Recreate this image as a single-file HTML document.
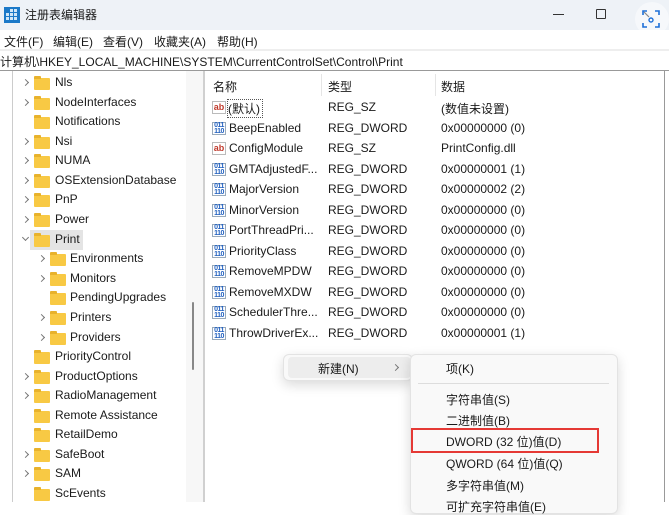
<!DOCTYPE html>
<html><head><meta charset="utf-8"><style>
*{margin:0;padding:0;box-sizing:border-box}
body{width:669px;height:502px;overflow:hidden;background:#fff;font-family:"Liberation Sans","Noto Sans CJK SC",sans-serif;font-size:12px;color:#1a1a1a;position:relative}
.a{position:absolute;white-space:nowrap}
.title{left:0;top:0;width:669px;height:30px;background:#eef2f7}
.fold{position:absolute;width:16px;height:12px;background:#f8c944;border-radius:1px}
.fold:before{content:"";position:absolute;left:0;top:-2px;width:7px;height:3px;background:#e8b22c;border-radius:1px 1px 0 0}
.arr{position:absolute;width:5px;height:5px;border-right:1.2px solid #777;border-bottom:1.2px solid #777;transform:rotate(-45deg)}
.dn{transform:rotate(45deg)}
.t{position:absolute;font-size:12px;white-space:nowrap}
.ic{position:absolute;width:14px;height:13px;font-size:9px;font-weight:bold;line-height:11px;text-align:center}
.ab{color:#c0392b;background:#fff;border:1px solid #bbb}
.bn{color:#1f5fbf;border:1px solid #9ab;font-size:7px;line-height:6px;letter-spacing:-.5px}
.menu{background:#f9f9f9;border:1px solid #e3e3e3;border-radius:6px;box-shadow:0 4px 12px rgba(0,0,0,.15)}
</style></head><body>
<div class="a title"></div>
<svg class="a" style="left:4px;top:7px" width="16" height="16"><rect x="0" y="0" width="16" height="16" fill="#1b79c8"/><g fill="#cfe6f7"><rect x="2" y="6" width="3" height="3"/><rect x="6" y="6" width="3" height="3"/><rect x="10" y="6" width="3" height="3"/><rect x="2" y="10" width="3" height="3"/><rect x="6" y="10" width="3" height="3"/><rect x="10" y="10" width="3" height="3"/><rect x="6" y="2" width="3" height="3"/><rect x="10" y="2" width="3" height="3"/></g></svg>
<div class="a" style="left:25px;top:6px;font-size:12px">注册表编辑器</div>
<div class="a" style="left:553px;top:14px;width:11px;height:1px;background:#333"></div>
<div class="a" style="left:596px;top:9px;width:10px;height:10px;border:1px solid #333;border-radius:1px"></div>
<div class="a" style="left:635px;top:2px;width:34px;height:34px;border-radius:50%;background:#f6f8fb"></div>
<svg class="a" style="left:641px;top:9px" width="20" height="20"><path d="M2 6V2h4M14 2h4v4M18 14v4h-4M6 18H2v-4" stroke="#1d6fd8" stroke-width="1.6" fill="none"/><circle cx="10" cy="11" r="2" stroke="#1d6fd8" stroke-width="1.4" fill="none"/><path d="M3 3l5 5" stroke="#888" stroke-width="1.2"/></svg>
<div class="a" style="left:0;top:30px;width:669px;height:20px;background:#fff"></div>
<div class="a" style="left:4px;top:33px">文件(F)</div>
<div class="a" style="left:53px;top:33px">编辑(E)</div>
<div class="a" style="left:103px;top:33px">查看(V)</div>
<div class="a" style="left:154px;top:33px">收藏夹(A)</div>
<div class="a" style="left:217px;top:33px">帮助(H)</div>
<div class="a" style="left:0;top:49px;width:669px;height:2px;background:#eee"></div>
<div class="a" style="left:0;top:53px">计算机\HKEY_LOCAL_MACHINE\SYSTEM\CurrentControlSet\Control\Print</div>
<div class="a" style="left:0;top:70px;width:669px;height:1px;background:#999"></div>
<div class="a" style="left:12px;top:71px;width:1px;height:431px;background:#ccc"></div>
<div class="a" style="left:186px;top:71px;width:17px;height:431px;background:#f7f7f7"></div>
<div class="a" style="left:192px;top:302px;width:2px;height:68px;background:#888;border-radius:1px"></div>
<div class="a" style="left:203px;top:71px;width:2px;height:431px;background:#d0d0d0"></div>
<div class="a" style="left:664px;top:71px;width:1px;height:431px;background:#999"></div>
<div class="a" style="left:30px;top:230px;width:53px;height:20px;background:#e4e4e4"></div>
<!-- tree -->
<div class="arr" style="left:23px;top:80px"></div><div class="fold" style="left:34px;top:78px"></div><div class="t" style="left:55px;top:75px">Nls</div>
<div class="arr" style="left:23px;top:100px"></div><div class="fold" style="left:34px;top:98px"></div><div class="t" style="left:55px;top:95px">NodeInterfaces</div>
<div class="fold" style="left:34px;top:117px"></div><div class="t" style="left:55px;top:114px">Notifications</div>
<div class="arr" style="left:23px;top:139px"></div><div class="fold" style="left:34px;top:137px"></div><div class="t" style="left:55px;top:134px">Nsi</div>
<div class="arr" style="left:23px;top:158px"></div><div class="fold" style="left:34px;top:156px"></div><div class="t" style="left:55px;top:153px">NUMA</div>
<div class="arr" style="left:23px;top:178px"></div><div class="fold" style="left:34px;top:176px"></div><div class="t" style="left:55px;top:173px">OSExtensionDatabase</div>
<div class="arr" style="left:23px;top:197px"></div><div class="fold" style="left:34px;top:195px"></div><div class="t" style="left:55px;top:192px">PnP</div>
<div class="arr" style="left:23px;top:217px"></div><div class="fold" style="left:34px;top:215px"></div><div class="t" style="left:55px;top:212px">Power</div>
<div class="arr dn" style="left:23px;top:235px"></div><div class="fold" style="left:34px;top:235px"></div><div class="t" style="left:55px;top:232px">Print</div>
<div class="arr" style="left:39px;top:256px"></div><div class="fold" style="left:50px;top:254px"></div><div class="t" style="left:70px;top:251px">Environments</div>
<div class="arr" style="left:39px;top:276px"></div><div class="fold" style="left:50px;top:274px"></div><div class="t" style="left:70px;top:271px">Monitors</div>
<div class="fold" style="left:50px;top:293px"></div><div class="t" style="left:70px;top:290px">PendingUpgrades</div>
<div class="arr" style="left:39px;top:315px"></div><div class="fold" style="left:50px;top:313px"></div><div class="t" style="left:70px;top:310px">Printers</div>
<div class="arr" style="left:39px;top:335px"></div><div class="fold" style="left:50px;top:333px"></div><div class="t" style="left:70px;top:330px">Providers</div>
<div class="fold" style="left:34px;top:352px"></div><div class="t" style="left:55px;top:349px">PriorityControl</div>
<div class="arr" style="left:23px;top:374px"></div><div class="fold" style="left:34px;top:372px"></div><div class="t" style="left:55px;top:369px">ProductOptions</div>
<div class="arr" style="left:23px;top:393px"></div><div class="fold" style="left:34px;top:391px"></div><div class="t" style="left:55px;top:388px">RadioManagement</div>
<div class="fold" style="left:34px;top:411px"></div><div class="t" style="left:55px;top:408px">Remote Assistance</div>
<div class="fold" style="left:34px;top:430px"></div><div class="t" style="left:55px;top:427px">RetailDemo</div>
<div class="arr" style="left:23px;top:452px"></div><div class="fold" style="left:34px;top:450px"></div><div class="t" style="left:55px;top:447px">SafeBoot</div>
<div class="arr" style="left:23px;top:471px"></div><div class="fold" style="left:34px;top:469px"></div><div class="t" style="left:55px;top:466px">SAM</div>
<div class="fold" style="left:34px;top:489px"></div><div class="t" style="left:55px;top:486px">ScEvents</div>
<!-- list header -->
<div class="t" style="left:213px;top:78px">名称</div>
<div class="a" style="left:321px;top:74px;width:1px;height:22px;background:#e5e5e5"></div>
<div class="t" style="left:328px;top:78px">类型</div>
<div class="a" style="left:435px;top:74px;width:1px;height:22px;background:#e5e5e5"></div>
<div class="t" style="left:441px;top:78px">数据</div>
<div class="ic ab" style="left:212px;top:101px">ab</div><div class="t" style="left:227px;top:99px;border:1px dotted #555;padding:0 2px 0 0">(默认)</div><div class="t" style="left:328px;top:100px">REG_SZ</div><div class="t" style="left:441px;top:100px">(数值未设置)</div>
<div class="ic bn" style="left:212px;top:122px">011<br>110</div><div class="t" style="left:229px;top:121px">BeepEnabled</div><div class="t" style="left:328px;top:121px">REG_DWORD</div><div class="t" style="left:441px;top:121px">0x00000000 (0)</div>
<div class="ic ab" style="left:212px;top:142px">ab</div><div class="t" style="left:229px;top:141px">ConfigModule</div><div class="t" style="left:328px;top:141px">REG_SZ</div><div class="t" style="left:441px;top:141px">PrintConfig.dll</div>
<div class="ic bn" style="left:212px;top:163px">011<br>110</div><div class="t" style="left:229px;top:162px">GMTAdjustedF...</div><div class="t" style="left:328px;top:162px">REG_DWORD</div><div class="t" style="left:441px;top:162px">0x00000001 (1)</div>
<div class="ic bn" style="left:212px;top:183px">011<br>110</div><div class="t" style="left:229px;top:182px">MajorVersion</div><div class="t" style="left:328px;top:182px">REG_DWORD</div><div class="t" style="left:441px;top:182px">0x00000002 (2)</div>
<div class="ic bn" style="left:212px;top:204px">011<br>110</div><div class="t" style="left:229px;top:203px">MinorVersion</div><div class="t" style="left:328px;top:203px">REG_DWORD</div><div class="t" style="left:441px;top:203px">0x00000000 (0)</div>
<div class="ic bn" style="left:212px;top:224px">011<br>110</div><div class="t" style="left:229px;top:223px">PortThreadPri...</div><div class="t" style="left:328px;top:223px">REG_DWORD</div><div class="t" style="left:441px;top:223px">0x00000000 (0)</div>
<div class="ic bn" style="left:212px;top:245px">011<br>110</div><div class="t" style="left:229px;top:244px">PriorityClass</div><div class="t" style="left:328px;top:244px">REG_DWORD</div><div class="t" style="left:441px;top:244px">0x00000000 (0)</div>
<div class="ic bn" style="left:212px;top:265px">011<br>110</div><div class="t" style="left:229px;top:264px">RemoveMPDW</div><div class="t" style="left:328px;top:264px">REG_DWORD</div><div class="t" style="left:441px;top:264px">0x00000000 (0)</div>
<div class="ic bn" style="left:212px;top:286px">011<br>110</div><div class="t" style="left:229px;top:285px">RemoveMXDW</div><div class="t" style="left:328px;top:285px">REG_DWORD</div><div class="t" style="left:441px;top:285px">0x00000000 (0)</div>
<div class="ic bn" style="left:212px;top:306px">011<br>110</div><div class="t" style="left:229px;top:305px">SchedulerThre...</div><div class="t" style="left:328px;top:305px">REG_DWORD</div><div class="t" style="left:441px;top:305px">0x00000000 (0)</div>
<div class="ic bn" style="left:212px;top:327px">011<br>110</div><div class="t" style="left:229px;top:326px">ThrowDriverEx...</div><div class="t" style="left:328px;top:326px">REG_DWORD</div><div class="t" style="left:441px;top:326px">0x00000001 (1)</div>
<!-- context menu -->
<div class="a menu" style="left:283px;top:354px;width:130px;height:27px"></div>
<div class="a" style="left:288px;top:357px;width:123px;height:21px;background:#ededed;border-radius:4px"></div>
<div class="t" style="left:318px;top:360px">新建(N)</div>
<div class="arr" style="left:393px;top:365px"></div>
<div class="a menu" style="left:410px;top:354px;width:208px;height:160px"></div>
<div class="t" style="left:446px;top:360px">项(K)</div>
<div class="a" style="left:418px;top:383px;width:191px;height:1px;background:#ddd"></div>
<div class="t" style="left:446px;top:391px">字符串值(S)</div>
<div class="t" style="left:446px;top:412px">二进制值(B)</div>
<div class="a" style="left:411px;top:428px;width:188px;height:25px;border:2px solid #e53935"></div>
<div class="t" style="left:446px;top:433px">DWORD (32 位)值(D)</div>
<div class="t" style="left:446px;top:455px">QWORD (64 位)值(Q)</div>
<div class="t" style="left:446px;top:477px">多字符串值(M)</div>
<div class="t" style="left:446px;top:498px">可扩充字符串值(E)</div>
</body></html>
